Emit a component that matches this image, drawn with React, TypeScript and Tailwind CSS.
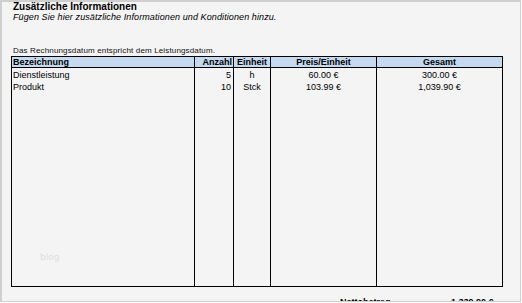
const rows = [
  { name: 'Dienstleistung', qty: '5', unit: 'h', price: '60.00 €', total: '300.00 €' },
  { name: 'Produkt', qty: '10', unit: 'Stck', price: '103.99 €', total: '1,039.90 €' },
];

export default function App() {
  return (
    <div className="relative w-[522px] h-[303px] overflow-hidden bg-white font-['Liberation_Sans',Arial,sans-serif] text-black">
      <div className="relative w-[521px] h-[302px] bg-[#f4f4f4] border-l-2 border-t-2 border-r border-b border-[#cfcfcf] overflow-hidden">
        {/* Kopfbereich */}
        <div className="pl-[11px] pt-0">
          <div className="text-[10px] font-bold leading-[11px] -mt-[1px]">Zusätzliche Informationen</div>
          <div className="text-[9px] italic leading-[11px] tracking-[0.1px]">
            Fügen Sie hier zusätzliche Informationen und Konditionen hinzu.
          </div>
          <div className="mt-[23px] text-[8px] leading-[10px] tracking-[0.15px] text-[#111]">
            Das Rechnungsdatum entspricht dem Leistungsdatum.
          </div>
        </div>

        {/* Positionen */}
        <div className="ml-[9px] w-[492px] h-[231px] border border-black flex flex-col text-[9px] leading-[12px]">
          <div className="grid grid-cols-[182px_39px_37px_106px_1fr] bg-[#c5d9f1] border-b border-black font-bold h-[11px] leading-[10px]">
            <div className="pl-[1px]">Bezeichnung</div>
            <div className="border-l border-black text-right pr-[1px]">Anzahl</div>
            <div className="border-l border-black text-center">Einheit</div>
            <div className="border-l border-black text-center">Preis/Einheit</div>
            <div className="border-l border-black text-center">Gesamt</div>
          </div>
          <div className="grid grid-cols-[182px_39px_37px_106px_1fr] flex-1">
            <div className="pl-[1px] pt-[1px]">
              {rows.map((r) => (
                <div key={r.name}>{r.name}</div>
              ))}
            </div>
            <div className="border-l border-black text-right pr-[2px] pt-[1px]">
              {rows.map((r) => (
                <div key={r.name}>{r.qty}</div>
              ))}
            </div>
            <div className="border-l border-black text-center pt-[1px]">
              {rows.map((r) => (
                <div key={r.name}>{r.unit}</div>
              ))}
            </div>
            <div className="border-l border-black text-center pt-[1px]">
              {rows.map((r) => (
                <div key={r.name}>{r.price}</div>
              ))}
            </div>
            <div className="border-l border-black text-center pt-[1px]">
              {rows.map((r) => (
                <div key={r.name}>{r.total}</div>
              ))}
            </div>
          </div>
        </div>

        {/* Summe */}
        <div className="flex text-[9px] font-bold leading-[12px] mt-[9px]">
          <div className="ml-[338px] w-[60px]">Nettobetrag</div>
          <div className="ml-[51px]">1,339.90 €</div>
        </div>

        <div className="absolute left-[38px] top-[249px] text-[9px] text-[#dedede] font-['DejaVu_Sans',sans-serif]">blog</div>
      </div>
    </div>
  );
}
